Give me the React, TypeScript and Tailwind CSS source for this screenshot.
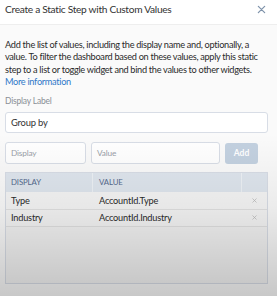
import React from "react";

function XIcon({ className }: { className?: string }) {
  return (
    <svg viewBox="0 0 10 10" className={className} fill="none" stroke="currentColor" strokeWidth="1.4" strokeLinecap="round">
      <path d="M1.5 1.5 L8.5 8.5 M8.5 1.5 L1.5 8.5" />
    </svg>
  );
}

export default function App() {
  const rows = [
    { d: "Type", v: "AccountId.Type" },
    { d: "Industry", v: "AccountId.Industry" },
  ];
  return (
    <div className="relative w-[277px] h-[296px] overflow-hidden bg-[#fafafa] font-['Lato','Liberation_Sans',sans-serif]">
      <div className="flex items-start justify-between h-[25px] pt-[2px] pl-[5px] pr-[11px] bg-white border-b border-[#eeeeee]">
        <span className="text-[10.2px] leading-[14px] tracking-[-0.3px] text-[#333]">Create a Static Step with Custom Values</span>
        <XIcon className="mt-[3px] w-[9px] h-[9px] text-[#7f93ab]" />
      </div>
      <div className="px-[5px] pt-[14px]">
        <p className="text-[9.2px] leading-[12.3px] tracking-[-0.3px] text-[#2a2a2a] whitespace-nowrap">
          Add the list of values, including the display name and, optionally, a
          <br />
          value. To filter the dashboard based on these values, apply this static
          <br />
          step to a list or toggle widget and bind the values to other widgets.
          <br />
          <span className="text-[#2f79c9]">More information</span>
        </p>
        <div className="mt-[8px] text-[8.5px] leading-[11px] tracking-[-0.2px] text-[#8a8f96]">Display Label</div>
        <div className="mt-[5px] w-[263px] h-[21px] flex items-center pl-[5px] bg-white border border-[#d8dde6] rounded-[3px] text-[9.4px] tracking-[-0.2px] text-[#333]">
          Group by
        </div>
        <div className="mt-[9px] flex gap-[5px] items-center">
          <div className="w-[81px] h-[22px] flex items-center pl-[5px] bg-white border border-[#d8dde6] rounded-[3px] text-[8.3px] tracking-[-0.2px] text-[#9aa0a8]">
            Display
          </div>
          <div className="w-[129px] h-[22px] flex items-center pl-[5px] bg-white border border-[#d8dde6] rounded-[3px] text-[8.3px] tracking-[-0.2px] text-[#9aa0a8]">
            Value
          </div>
          <div className="w-[33px] h-[21px] flex items-center justify-center bg-[#c3d1e0] rounded-[3px] text-[8.5px] font-bold text-white">
            Add
          </div>
        </div>
        <div className="mt-[8px] w-[263px] h-[112px] border border-[#d8dde6] bg-[#f4f4f4] flex flex-col">
          <div className="flex h-[19px] bg-[#dfe6ee] text-[7.8px] tracking-[-0.1px] text-[#54698d] items-center">
            <div className="w-[87px] pl-[5px] h-full flex items-center border-r border-[#eef2f6]">DISPLAY</div>
            <div className="w-[149px] pl-[6px] h-full flex items-center border-r border-[#eef2f6]">VALUE</div>
            <div className="flex-1" />
          </div>
          {rows.map((r) => (
            <div key={r.d} className="flex h-[17.5px] items-center border-b border-[#e2e2e2] bg-[#f6f6f6] text-[9.2px] tracking-[-0.2px] text-[#2a2a2a]">
              <div className="w-[87px] pl-[5px]">{r.d}</div>
              <div className="w-[149px] pl-[6px]">{r.v}</div>
              <div className="flex-1 flex justify-center">
                <XIcon className="w-[5px] h-[5px] text-[#b8b8b8]" />
              </div>
            </div>
          ))}
          <div className="flex-1" />
        </div>
      </div>
      <div className="pointer-events-none absolute inset-0 bg-[linear-gradient(to_bottom,rgba(0,0,0,0)_0%,rgba(0,0,0,0)_45%,rgba(0,0,0,0.06)_70%,rgba(0,0,0,0.2)_100%)]" />
    </div>
  );
}
